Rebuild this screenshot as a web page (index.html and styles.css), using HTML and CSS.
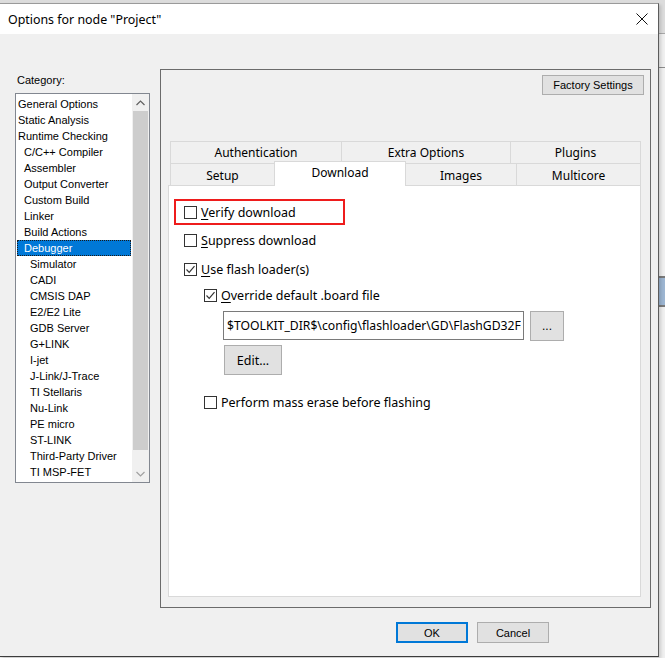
FILE: index.html
```html
<!DOCTYPE html>
<html lang="en">
<head>
    <meta charset="UTF-8">
    <title>Options for node "Project"</title>
    <link rel="stylesheet" href="styles.css">
</head>
<body>
    <div class="dialog">
        <div class="titlebar">
            <span class="title">Options for node "Project"</span>
            <svg class="close" width="12" height="12" viewBox="0 0 12 12">
                <path d="M0.5 0.5 L11.5 11.5 M11.5 0.5 L0.5 11.5" stroke="#111" stroke-width="1" fill="none"/>
            </svg>
        </div>

        <div class="dialog-body">
            <div class="category">
                <div class="category-label">Category:</div>
                <div class="listbox">
                    <ul class="items">
                        <li>General Options</li>
                        <li>Static Analysis</li>
                        <li>Runtime Checking</li>
                        <li class="lvl1">C/C++ Compiler</li>
                        <li class="lvl1">Assembler</li>
                        <li class="lvl1">Output Converter</li>
                        <li class="lvl1">Custom Build</li>
                        <li class="lvl1">Linker</li>
                        <li class="lvl1">Build Actions</li>
                        <li class="lvl1 selected">Debugger</li>
                        <li class="lvl2">Simulator</li>
                        <li class="lvl2">CADI</li>
                        <li class="lvl2">CMSIS DAP</li>
                        <li class="lvl2">E2/E2 Lite</li>
                        <li class="lvl2">GDB Server</li>
                        <li class="lvl2">G+LINK</li>
                        <li class="lvl2">I-jet</li>
                        <li class="lvl2">J-Link/J-Trace</li>
                        <li class="lvl2">TI Stellaris</li>
                        <li class="lvl2">Nu-Link</li>
                        <li class="lvl2">PE micro</li>
                        <li class="lvl2">ST-LINK</li>
                        <li class="lvl2">Third-Party Driver</li>
                        <li class="lvl2">TI MSP-FET</li>
                    </ul>
                    <div class="scrollbar">
                        <div class="sb-arrow">
                            <svg width="9" height="6" viewBox="0 0 9 6"><path d="M0.5 5 L4.5 1 L8.5 5" stroke="#606060" stroke-width="1.2" fill="none"/></svg>
                        </div>
                        <div class="sb-thumb"></div>
                        <div class="sb-track"></div>
                        <div class="sb-arrow">
                            <svg width="9" height="6" viewBox="0 0 9 6"><path d="M0.5 1 L4.5 5 L8.5 1" stroke="#a0a0a0" stroke-width="1.2" fill="none"/></svg>
                        </div>
                    </div>
                </div>
            </div>

            <div class="group">
                <div class="group-top">
                    <button class="btn factory">Factory Settings</button>
                </div>

                <div class="tabs">
                    <div class="tab-row">
                        <div class="tab w-auth">Authentication</div>
                        <div class="tab w-extra">Extra Options</div>
                        <div class="tab w-plugins">Plugins</div>
                    </div>
                    <div class="tab-row front">
                        <div class="tab w-setup">Setup</div>
                        <div class="tab w-download active">Download</div>
                        <div class="tab w-images">Images</div>
                        <div class="tab w-multicore">Multicore</div>
                    </div>
                </div>

                <div class="tab-page">
                    <div class="highlight">
                        <label class="check"><span class="box"></span><span><u>V</u>erify download</span></label>
                    </div>
                    <label class="check row-suppress"><span class="box"></span><span><u>S</u>uppress download</span></label>
                    <label class="check row-flash"><span class="box checked"><svg width="11" height="11" viewBox="0 0 11 11"><path d="M1.5 5.5 L4.2 8.3 L9.5 2.2" stroke="#333" stroke-width="1.2" fill="none"/></svg></span><span><u>U</u>se flash loader(s)</span></label>
                    <label class="check indent row-override"><span class="box checked"><svg width="11" height="11" viewBox="0 0 11 11"><path d="M1.5 5.5 L4.2 8.3 L9.5 2.2" stroke="#333" stroke-width="1.2" fill="none"/></svg></span><span><u>O</u>verride default .board file</span></label>

                    <div class="path-row">
                        <div class="path-field"><span class="path-text">$TOOLKIT_DIR$\config\flashloader\GD\FlashGD32F4xx.board</span></div>
                        <button class="btn browse">...</button>
                    </div>
                    <button class="btn edit">Edit...</button>

                    <label class="check indent row-erase"><span class="box"></span><span>Perform mass erase before flashing</span></label>
                </div>
            </div>
        </div>

        <div class="dialog-footer">
            <button class="btn ok">OK</button>
            <button class="btn">Cancel</button>
        </div>
    </div>
</body>
</html>
```

FILE: styles.css
```css
body {
    margin: 0;
    padding: 0;
    width: 665px;
    height: 658px;
    overflow: hidden;
    font-family: "Noto Sans", "Noto Sans CJK SC", sans-serif;
    font-size: 12.5px;
    color: #000000;
    background:
        linear-gradient(to bottom,
            #dcdcdc 0, #dcdcdc 33px, #a8a8a8 33px, #a8a8a8 34px,
            #f0f0f0 34px, #f0f0f0 67px, #8c8c8c 67px, #8c8c8c 68px,
            #f0f0f0 68px, #f0f0f0 276px, #7a7a7a 276px, #7a7a7a 278px,
            #9db6d2 278px, #9db6d2 305px, #7a7a7a 305px, #7a7a7a 307px,
            #f0f0f0 307px);
}
.dialog {
    width: 658px;
    height: 652px;
    margin-top: 3px;
    background-color: #f0f0f0;
    border-top: 1px solid #9a9a9a;
    border-right: 1px solid #5c5c5c;
    border-bottom: 1px solid #3c3c3c;
    display: flex;
    flex-direction: column;
    box-shadow: 2px 2px 3px rgba(0, 0, 0, 0.15);
}
.titlebar {
    height: 30px;
    background-color: #ffffff;
    display: flex;
    align-items: center;
    justify-content: space-between;
    padding: 0 10px 0 8px;
}
.title {
    font-size: 12.4px;
    color: #000000;
}
.close {
    display: block;
}

/* left side */
.dialog-body {
    display: flex;
    padding: 35px 0 0 15px;
    gap: 10px;
}
.category {
    width: 135px;
}
.category-label {
    font-family: "Liberation Sans", Arial, sans-serif;
    font-size: 11px;
    line-height: 14px;
    margin-top: 4px;
    padding-left: 2px;
}
.listbox {
    margin-top: 6px;
    height: 388px;
    border: 1px solid #828790;
    background-color: #ffffff;
    display: flex;
}
.items {
    list-style: none;
    margin: 0;
    padding: 2px 0 0 1px;
    width: 114px;
    font-family: "Liberation Sans", Arial, sans-serif;
    font-size: 11px;
}
.items li {
    height: 16px;
    line-height: 16px;
    padding-left: 1px;
    white-space: nowrap;
}
.items li.lvl1 {
    padding-left: 7px;
}
.items li.lvl2 {
    padding-left: 13px;
}
.items li.selected {
    background-color: #0078d7;
    color: #ffffff;
    outline: 1px dotted #1a1a1a;
    outline-offset: -1px;
}
.scrollbar {
    width: 17px;
    margin-left: auto;
    display: flex;
    flex-direction: column;
    background-color: #f0f0f0;
}
.sb-arrow {
    height: 17px;
    display: flex;
    align-items: center;
    justify-content: center;
}
.sb-thumb {
    height: 339px;
    margin: 0 1px;
    background-color: #cdcdcd;
}
.sb-track {
    flex: 1;
}

/* right group */
.group {
    width: 489px;
    height: 537px;
    border: 1px solid #6b6b6b;
}
.group-top {
    display: flex;
    justify-content: flex-end;
    padding: 5px 6px 0 0;
    height: 61px;
    align-items: flex-start;
}
.btn {
    font-family: "Liberation Sans", Arial, sans-serif;
    font-size: 11px;
    color: #000000;
    background-color: #e1e1e1;
    border: 1px solid #adadad;
    padding: 0;
    margin: 0;
}
.factory {
    width: 102px;
    height: 20px;
}
.tabs {
    margin: 5px 0 0 9px;
    width: 471px;
    font-size: 12px;
}
.tab-row {
    display: flex;
    height: 22px;
}
.tab {
    box-sizing: border-box;
    height: 22px;
    line-height: 22px;
    text-align: center;
    background-color: #f0f0f0;
    border: 1px solid #d9d9d9;
    border-bottom: none;
    margin-left: -1px;
}
.tab:first-child {
    margin-left: 0;
}
.front .tab {
    line-height: 23px;
}
.w-auth { width: 172px; }
.w-extra { width: 170px; }
.w-plugins { width: 131px; }
.w-setup { width: 105px; }
.w-download { width: 132px; }
.w-images { width: 112px; }
.w-multicore { width: 125px; }
.front .tab.active {
    background-color: #ffffff;
    height: 25px;
    margin-top: -2px;
    line-height: 22px;
    position: relative;
    z-index: 1;
}
.tab-page {
    margin-left: 7px;
    width: 473px;
    height: 412px;
    border: 1px solid #d9d9d9;
    background-color: #ffffff;
    padding-top: 13px;
    box-sizing: border-box;
}

/* checkboxes */
.check {
    display: flex;
    align-items: center;
    height: 16px;
    gap: 4px;
    padding-left: 15px;
}
.check u {
    text-decoration: underline;
    text-underline-offset: 2px;
}
.box {
    width: 11px;
    height: 11px;
    border: 1px solid #333333;
    background-color: #ffffff;
    display: flex;
    align-items: center;
    justify-content: center;
}
.box svg {
    display: block;
}
.highlight {
    margin-left: 5px;
    width: 167px;
    height: 22px;
    border: 2px solid #ee1c1c;
    display: flex;
    align-items: center;
}
.highlight .check {
    padding-left: 8px;
}
.row-suppress { margin-top: 7px; }
.row-flash { margin-top: 13px; }
.row-override { margin-top: 10px; }
.indent {
    padding-left: 35px;
}
.path-row {
    display: flex;
    gap: 6px;
    margin: 8px 0 0 54px;
}
.path-field {
    width: 296px;
    height: 27px;
    border: 1px solid #7a7a7a;
    padding-left: 3px;
    line-height: 27px;
    overflow: hidden;
    font-size: 12.2px;
}
.path-text {
    display: block;
    width: 294px;
    overflow: hidden;
    white-space: nowrap;
}
.browse {
    width: 34px;
    height: 30px;
    font-size: 12px;
}
.edit {
    display: block;
    margin: 4px 0 0 55px;
    width: 58px;
    height: 30px;
    font-family: "Noto Sans", sans-serif;
    font-size: 12.5px;
}
.row-erase { margin-top: 19px; }

/* footer */
.dialog-footer {
    display: flex;
    gap: 9px;
    padding: 14px 0 0 396px;
}
.ok, .dialog-footer .btn {
    width: 72px;
    height: 21px;
}
.ok {
    border: 2px solid #0078d7;
}
```
